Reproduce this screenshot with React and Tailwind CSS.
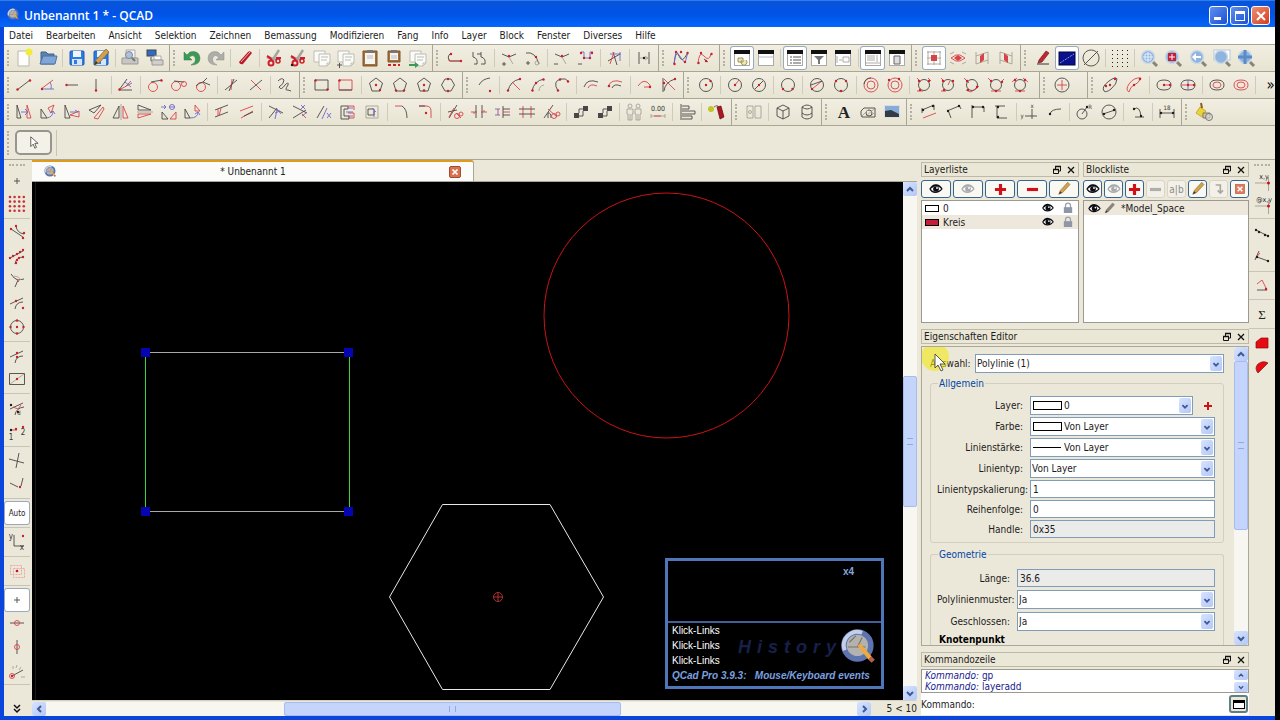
import React from "react";

const INK = { k: "#4a4643", r: "#d8434a", b: "#6c67cc", g: "#a5a197", w: "#ffffff" };

/* Compact drawing notation, parts separated by ";".
   k/r/b/g/w + path = stroke, capital letter = fill,
   "d x y ..." = red dots, "q x y ..." = dark dots,
   "ok x y r" = circle outline, "t size x y text" = label */
function Glyph({ s }) {
  return (
    <>
      {s.split(";").map((part, i) => {
        const p = part.trim();
        const op = p.slice(0, p.indexOf(" "));
        const rest = p.slice(p.indexOf(" ") + 1);
        if (op === "d" || op === "q") {
          const n = rest.split(" ").map(Number);
          const dots = [];
          for (let j = 0; j < n.length; j += 2) dots.push(<circle key={j} cx={n[j]} cy={n[j + 1]} r="1.2" fill={op === "d" ? "#c8202c" : "#1c1c1c"} />);
          return <g key={i}>{dots}</g>;
        }
        if (op[0] === "o") {
          const n = rest.split(" ");
          return <circle key={i} cx={n[0]} cy={n[1]} r={n[2]} fill="none" stroke={INK[op[1]]} strokeWidth="0.9" />;
        }
        if (op === "t") {
          const [size, x, y, ...words] = rest.split(" ");
          return <text key={i} x={x} y={y} fontSize={size} textAnchor="middle" fill="#333">{words.join(" ")}</text>;
        }
        if (op === op.toUpperCase()) return <path key={i} d={rest} fill={INK[op.toLowerCase()]} />;
        return <path key={i} d={rest} fill="none" stroke={INK[op]} strokeWidth="0.9" />;
      })}
    </>
  );
}

const G = {
  "Linie 2 Punkte": "k M5 17L18 7;d 5.5 16.5 18 7.5",
  "Linie Winkel": "r M5 16L17 7;b M6 16H18M14 9Q16 12 15 16;d 6 16",
  "Linie horizontal": "k M6 12H18;d 6.5 12",
  "Linie vertikal": "k M12 6V18;d 12 17.5",
  "Winkelhalbierende": "k M5 17L13 6M5 17H18;r M5 17L18 10;b M11 9L17 14M12 13L17 8;d 5.5 16.5",
  "Tangente 1": "or 10 14 4.5;k M8 9L19 7;d 18.5 7.5",
  "Tangente 2": "or 9 13 4.5;k M7 8L17 9;or 17 11 2.5",
  "Tangente rechtwinklig": "or 10 14 4.5;k M5 13Q8 10 12 9L19 12M12 9L16 5",
  "Relativer Winkel": "k M5 17L17 7;r M12 6L11 17;k M14 6L9 18",
  "Orthogonal": "k M6 17L18 7;r M7 7L17 17",
  "Freihand": "k M5 8Q9 4 11 7Q11 11 6 14Q8 18 12 12Q16 8 15 12Q11 18 15 17L18 18",
  "Rechteck 2 Punkte": "k M5 7H18V17H5Z;d 5.5 7.5 17.5 16.5",
  "Rechteck Grösse": "r M5 7H18V17H5Z;k M5 17H18;d 5.5 7.5",
  "Polygon Zentrum Ecke": "k M12 5L18.5 10L16 18H8L5.5 10Z;d 12 12 16 17",
  "Polygon Seite": "k M12 5L18.5 10L16 18H8L5.5 10Z;d 8 17.5 16 17.5",
  "Polygon Zentrum Seite": "k M12 5L18.5 10L16 18H8L5.5 10Z;d 12 12 12 17.5",
  "Polygon Seite Seite": "k M9 6H15L18.5 12L15 18H9L5.5 12Z;d 12 6 12 18",
  "Bogen": "k M6 12Q9 6 17 5;d 17 18",
  "Bogen 3 Punkte": "k M6 18Q8 8 18 6;r M10 9L18 17;d 6 17.5 18 6",
  "Bogen 2 Punkte Radius": "k M6 18Q8 8 18 6;g M13 18Q13 13 18 12;d 6.5 17.5 17.5 6.5 10 10",
  "Bogen 2 Punkte Winkel": "k M8 18Q2 8 11 6Q16 5 18 8;d 8 17.5 18 8.5 10 6.5",
  "Bogen konzentrisch": "k M4 14Q7 5 18 9;r M8 15Q10 10 17 13",
  "Bogen konzentrisch Abstand": "r M4 14Q7 5 18 9;k M8 15Q10 10 17 13;d 5 13",
  "Bogen tangential": "r M5 13Q11 4 17 12V14H11;d 17 14",
  "Bogen Segment": "k M6 5V19M7 18Q8 9 18 6;r M7 6L18 17;d 7 10 18 6",
  "Kreis Zentrum Punkt": "ok 12 12 6.5;d 12 12 16.5 8",
  "Kreis Zentrum Radius": "ok 12 12 6.5;r M12 12L16 7;d 12 12",
  "Kreis Zentrum Durchmesser": "ok 12 12 6.5;k M8 16L16 8;d 12 12",
  "Kreis 2 Punkte": "ok 12 12 6.5;d 7 16 16.5 16",
  "Kreis 2 Punkte Radius": "ok 12 12 6.5;r M7 16L17 8;k M6 12L17 8;d 7 16",
  "Kreis 3 Punkte": "ok 12 12 6.5;d 7 8 17 8 12 18",
  "Kreis konzentrisch": "or 12 12 7;or 12 12 4;k M5 11Q6 5 12 5",
  "Kreis konzentrisch Abstand": "or 12 12 7;or 12 12 4;d 16 6 6 7",
  "Kreis tangential 1": "ok 12 12 5.5;r M5 5L9 9M5 18H11M16 5L19 8;d 7 8 17 8 8 17",
  "Kreis tangential 2": "ok 12 12 5.5;r M5 5L9 9M5 18H10M12 12L14 8;d 7 8 17 8 8 17",
  "Kreis tangential 3": "ok 12 12 5.5;r M4 5L9 10M6 17L11 19L19 13;d 7 8 8 17 17 14",
  "Kreis tangential 4": "ok 12 12 5.5;r M4 5L8 9M7 18H17M17 9L20 6;d 7 8 12 18 18 9",
  "Kreis tangential 5": "ok 12 12 5.5;r M4 9L9 5M7 18H17M15 5L20 9;d 7 7 17 7 12 18",
  "Kreis Inkreis": "ok 12 12 7;r M12 7V17M7 12H17",
  "Ellipse Zentrum": "k M6 18Q3 14 11 8Q18 3 19 6Q19 11 13 16Q8 20 6 18;d 12 12 17 6 8 13",
  "Ellipsenbogen": "r M7 19Q3 17 7 11Q12 4 19 5M19 5Q16 11 12 12Q8 14 7 19;d 12 12 18 6",
  "Ellipse 4 Punkte": "k M5 12Q5 7 12 7T19 12Q19 17 12 17T5 12;r M12 12H19;d 12 12 18 12",
  "Ellipse in Rechteck": "k M5 12Q5 7 12 7T19 12Q19 17 12 17T5 12;b M12 7V17;r M6 12H19;d 12 12 18 12",
  "Ellipse konzentrisch": "k M5 12Q5 7 12 7T19 12Q19 17 12 17T5 12;r M8 12Q8 9 12 9T16 12Q16 15 12 15T8 12",
  "Ellipse konzentrisch Abstand": "r M5 12Q5 7 12 7T19 12Q19 17 12 17T5 12;r M8 12Q8 9 12 9T16 12Q16 15 12 15T8 12",
  "Verschieben": "k M5 5V18H9Z;r M15 5V18H19Z;b M9 12H16M13 9L16 12L13 15",
  "Drehen": "k M5 9V18H11Z;r M12 8L18 5L15 13Z;b M11 18Q17 17 17 11M14 13L17 11L19 14",
  "Verschieben und Drehen": "k M5 5V18H10Z;r M10 15L19 11V17Z;b M10 12H18M15 10L18 12",
  "Skalieren": "k M4 10L16 5L9 13Z;r M9 18L18 7L19 9L13 19Z",
  "Spiegeln": "k M4 18L10 6V18Z;r M14 6L19 18H14Z;g M12 4V20",
  "Kippen": "k M5 5L18 10H5Z;r M5 18L18 14H5Z;g M4 12H20",
  "Drehen zwei": "k M5 12V19H11Z;r M19 12V19H13Z;b M4 7H9M7 5L9 7L7 9M12 7H18;ob 15 7 2.5",
  "Drehen und Kopieren": "k M4 9V18H9Z;r M14 5L19 11H14Z;b M9 18Q17 18 17 12M14 14L17 12L19 15",
  "Trimmen": "k M5 10L18 5M5 17L18 12;r M8 9V16M11 8L9 16",
  "Trimmen beide": "r M5 11L18 6M6 18L18 11;k M9 16L18 12",
  "Verlängern": "k M5 6L19 13M5 18L13 8;b M13 9L17 14M11 13L16 11M11 19L13 10",
  "Dehnen": "k M5 6L19 13M5 18L18 10;b M13 5L17 9M14 16L18 13M17 5L13 9;r M14 14L18 18",
  "Linie teilen": "k M5 18L12 6;b M10 19L15 8M15 13L19 18M15 18L19 13",
  "Abrunden Kette": "k M5 6H12V9H8V16H13V19H5Z;r M12 6H18V10M12 13H18V18H12;b M12 8H17M10 12H17M12 16H17",
  "Explodieren": "g M6 6H18V18H6Z;k M8 9H14V15H8Z;b M12 8L16 12M14 11V17",
  "Fase": "r M5 6H12;k M12 6Q17 9 17 18",
  "Abrunden": "r M5 6H12Q17 6 17 11V18;k M5 6H11;d 12 13",
  "Teilen": "k M6 18L14 5M5 12L14 10;r M11 8L6 17M13 13L18 18;or 14 16 2.5;or 18 14 2",
  "Unterbrechen": "r M4 12H10M14 12H20;k M9 5V18M15 5V18;r M7 12V14M17 12V10",
  "Ausbrechen": "k M12 6V18M12 9H19M12 15H19;r M12 12H19M7 9V15;b M4 9H9M4 15H9",
  "Schnitt": "r M8 6V18M16 6V18;k M4 9H20M4 14H20",
  "Schere Pfad": "k M4 18L13 5M8 18V13Q11 12 11 18;r M8 9L17 17;or 14 16 2.5;or 18 14 2",
  "Ordnung vor": "K M5 13H10V18H5Z M14 6H19V11H14Z;k M10 16H14V11M10 13V9H14",
  "Ordnung hinter": "K M5 13H10V18H5Z M14 6H19V11H14Z;k M10 16H14V11M10 13V9H14",
  "Eigenschaften kopieren": "g M5 9H11V14H10V20H6V14H5ZM13 9H19V14H18V20H14V14H13ZM8 14V20M16 14V20;og 8 6 2;og 16 6 2",
  "Nullpunkt": "t 7 12 11 0.00;g M5 16H19M5 14V18M19 14V18;r M8 16H15",
  "Ausrichten": "k M6 4V20M7 6H14V9H7M7 11H20V14H7M7 16H17V19H7",
  "Block": "g M5 6H11V18H5ZM13 6H19V18H13Z;og 8 12 1.5",
  "Quader": "k M12 5L18 8V16L12 19L6 16V8ZM6 8L12 11L18 8M12 11V19",
  "Zylinder": "k M7 7Q12 3 17 7V17Q12 21 7 17ZM7 7Q12 11 17 7M7 13Q12 17 17 13",
  "Schraffur": "k M5 15V11L8 8H19V17H6Z;ok 13 13 3;g M6 16L13 9M9 17L18 9M14 17L18 13",
  "Bemassung ausgerichtet": "k M5 10L17 5M5 8V13M17 5V10;r M6 18L19 13;q 6 10 16 6",
  "Bemassung gedreht": "k M5 11L17 6M6 10L9 18M17 5L19 9;q 6 11 17 6",
  "Bemassung horizontal": "k M6 7H18M6 5V18M18 7V12;q 7 7 17 7",
  "Bemassung vertikal": "k M7 6V18M5 6H15M7 18H17;q 8 7 8 17",
  "Bemassung Ordinate": "k M13 9V19M6 16H18;t 6 13 8 x;t 6 3 18 y",
  "Führungslinie": "k M7 14Q8 9 18 9;q 7 14",
  "Bemassung Radius": "ok 10 14 5;k M10 14L15 7;t 6 18 9 R;q 15 7",
  "Bemassung Durchmesser": "ok 12 12 7;k M6 14L18 10;q 7 14 17 10",
  "Bemassung Winkel": "k M8 9Q14 5 15 17M9 17H18;q 8 9 15 16",
  "Bemassung Text": "k M5 13H19M5 9V18M19 9V18;t 6 12 10 18;q 6 13 18 13",
  "Polylinie zeichnen": "k M8 7Q3 11 7 15H18;r M6 13V15H18;d 18 15 8 8",
  "Segment anhängen": "k M5 6V11Q10 12 9 18H6M13 6V11Q18 12 17 18H13M9 8H13",
  "Knoten hinzufügen": "k M5 8L12 11L19 8M5 18H9M7 16V20;g M12 11L16 18;d 12 10",
  "Knoten anhängen": "k M5 7Q14 5 18 18M5 17H9M7 15V19;og 16 17 2;d 15 11",
  "Knoten löschen": "k M5 8L12 11L19 8M4 18H8;g M12 11L16 18;d 12 10",
  "Segment löschen": "b M7 6H10V12H16V6H19;k M4 18H8;d 7 7 10 12 16 12 18 7",
  "Polylinie trimmen": "k M5 15L17 8M10 6L14 19;b M7 8H18M17 6V15;r M7 18L11 6",
  "Äquidistant": "k M7 6V18M17 6V18;g M7 12H17M13 10L16 12L13 14;q 12 12",
  "Spline Kontrollpunkte": "k M5 18Q7 2 10 10T18 8;b M5 18L7 5L16 17L19 6;d 5.5 18 7 6 12 6 16 16 18.5 7",
  "Spline Passpunkte": "r M5 18Q6 4 11 10T18 8;k M11 13L15 16;d 5.5 17 8 7 13 15 18.5 8",
  "Iso oben": "r M5 12L10 9H14L19 12L14 15H10Z;R M8 12L12 9L16 12L12 15Z;g M4 8L8 6M16 6L20 8M4 16L8 18M16 18L20 16",
  "Iso links": "g M6 6V18M18 6V18M6 10L18 6M6 18L18 14;R M10 10L14 7V14L10 17Z",
  "Iso rechts": "g M6 6V18M18 6V18M6 6L18 10M6 14L18 18;R M10 7L14 10V17L10 14Z",
  "Orthogonales Raster": "g M6 5V19M18 5V19M5 6H19M5 18H19M5 12H19M12 5V19;R M9 9H15V15H9Z",
  "Ohne Füllung": "k M12 4A8 8 0 1 0 12.1 4M5 19L19 5",
  "Fang frei": "k M9 12H15M12 9V15",
  "Fang Endpunkte": "k M6 8L18 16M11 5Q12 12 19 13;d 6 8 18 17 11 5 19 12",
  "Fang auf Objekt": "k M5 13L18 6M10 19Q11 12 19 12;d 5 13 8 11 12 9 15 7 18 5 11 18 12 15 14 13 18 12",
  "Fang lotrecht": "k M6 6Q9 11 13 12L19 11M13 12L10 19;g M9 8Q14 8 16 12;r M11 11L14 14",
  "Fang tangential": "k M5 13L18 7M10 18Q11 11 18 11;d 18 17 11 10",
  "Fang Zentrum": "ok 12 12 6.5;d 12 12 5.5 12 18.5 12 12 5.5 12 18.5",
  "Fang Mitte": "k M5 13L18 7M10 19Q11 12 18 12;d 12 9 12 13",
  "Fang Referenz": "k M4.5 6.5H19.5V17.5H4.5Z;g M5 17L19 7;d 12 12",
  "Fang Schnittpunkt": "k M5 13L18 7M10 19Q11 12 19 11;q 6 9 13 16;r M8 11L13 13L16 9;t 6 14 19 d",
  "Fang Abstand": "r M6 10H12;t 8 6 20 1;t 8 18 15 2;q 6 10;d 11 9 18 7",
  "Fang Kreuz": "k M14 4L11 19M4 10L19 14",
  "Fang Kreuz manuell": "k M5 11L13 15M18 6L16 14;d 15 15",
  "Koordinate kartesisch": "k M9 5V16H19;t 8 6 9 y;t 8 17 20 x;d 18 6",
  "Keine Einschränkung": "k M9 12H15M12 9V15",
  "Einschränkung horizontal": "k M5 12H19;or 12 12 2.5",
  "Einschränkung vertikal": "k M12 5V19;or 12 12 2.5",
  "Einschränkung Winkel": "k M7 18L18 12;or 7 18 2.5;g M16 19H20M8 8V11M12 7L11 10M16 9L14 12;d 7 18",
  "Abstand Punkte": "k M6 9L18 15;q 6 9 9 11 18 15 15 14",
  "Abstand Objekt": "k M7 12L18 16M9 6L5 15;r M5 14L10 8;q 7 12 18 16",
  "Winkel messen": "r M7 10L12 6L17 16;k M7 16H17;d 16 15",
};

const Frame = ({ children }) => (
  <>
    <rect x="4.500" y="4.500" width="15" height="15" fill="#fff" stroke="#aaa" />
    <rect x="4" y="4" width="16" height="4" fill="#111" />
    {children}
  </>
);
const Lens = ({ children }) => (
  <>
    <path d="M14 14L20 20" stroke="#8a8376" strokeWidth="3" />
    <circle cx="11" cy="11" r="6.500" fill="#8fb4dd" stroke="#cdd9e6" strokeWidth="1.500" />
    {children}
  </>
);
const Scissors = () => (
  <>
    <path d="M17 4L10 15M5 11L15 14" stroke="#a8a59e" strokeWidth="2.500" />
    <circle cx="9" cy="17" r="2.500" fill="none" stroke="#cf1f2c" strokeWidth="2" />
    <path d="M5 10Q9 12 10 15M14 12L19 12" stroke="#cf1f2c" strokeWidth="2" fill="none" />
    <circle cx="16" cy="15" r="2" fill="none" stroke="#cf1f2c" strokeWidth="1.500" />
  </>
);
const Pages = () => (
  <g fill="#fbfbf8" stroke="#bdbcb4">
    <path d="M4 5H15V16H4Z" />
    <path d="M9 8H20V17L17 20H9Z" />
    <path d="M20 17H17V20M11 11H18M11 14H17" fill="none" />
  </g>
);
const Clip = ({ small }) => (
  <g>
    <path d={small ? "M6 5H18V16H6Z" : "M5 5H19V20H5Z"} fill="#a2703c" stroke="#7e552b" />
    <path d={small ? "M8 7H16V14H8Z" : "M7 7H17V18H7Z"} fill="#f5f4f0" />
    <path d="M9 4H15V7H9Z" fill="#777" />
    <path d="M9 10H15M9 12H15" stroke="#bbb" />
    {small && <path d="M6 19H18" stroke="#cc2222" strokeWidth="2" strokeDasharray="3 2" />}
  </g>
);
const Floppy = () => (
  <g>
    <rect x="5" y="5" width="14" height="14" rx="1" fill="#2f7be0" stroke="#1b59b8" />
    <rect x="8" y="5" width="8" height="6" fill="#eef4fc" />
    <rect x="7" y="13" width="10" height="6" fill="#d5e5f8" />
    <rect x="9" y="14" width="3" height="4" fill="#2f7be0" />
  </g>
);
const Pencil = ({ gray }) => (
  <g>
    <path d="M5 19L7 14L17 3L20 6L10 17Z" fill={gray ? "#8c857c" : "#d3a04c"} stroke={gray ? "#6b655e" : "#82602c"} strokeWidth="0.700" />
    <path d="M5 19L7 15L9 17Z" fill="#333" />
  </g>
);
const Eye = ({ dim }) => (
  <g fill={dim ? "#a9a9a9" : "#0c0c14"}>
    <path d="M2 12Q6 4 13 5Q19 6 22 12Q17 18 11 18Q5 18 2 12Z" />
    <path d="M4 12Q8 8 12 8Q17 8 20 12Q15 16 11 16Q7 16 4 12Z" fill="#fff" />
    <circle cx="12" cy="12" r="4.300" />
    <circle cx="13.500" cy="10.500" r="1.400" fill="#fff" />
  </g>
);
const Plus = () => <path d="M10 5H14V10H19V14H14V19H10V14H5V10H10Z" fill="#cf1018" />;
const Minus = () => <path d="M5 10H19V14H5Z" fill="#cf1018" />;
const Coord = ({ label }) => (
  <>
    <text x="14" y="10" fontSize="7" textAnchor="middle" fill="#222">{label}</text>
    <path d="M5 14H19M18.500 8V22" stroke="#a9a49a" />
    <circle cx="18.500" cy="14" r="1.500" fill="#c8101c" />
  </>
);
const AppLogo = () => (
  <>
    <circle cx="11" cy="11" r="8.500" fill="#b4b2ae" stroke="#5d74ae" strokeWidth="3.500" />
    <path d="M3 14A8.500 8.500 0 0 1 14 3" fill="none" stroke="#c3cfe8" strokeWidth="2.500" />
    <path d="M5 12H16M11 12L14 6M6 9L10 5" stroke="#77746f" strokeWidth="0.700" />
    <path d="M11 11L18 20L20 18L13 10Z" fill="#f0a93c" />
    <path d="M18 20L20 18L22 20L20 22Z" fill="#b5604c" />
  </>
);

const ART = {
  "Neu": (
    <>
      <path d="M6 5H17V20H6Z" fill="#fdfdfb" stroke="#b9b7ae" />
      <circle cx="17" cy="6" r="3.500" fill="#f1ec3a" />
    </>
  ),
  "Öffnen": (
    <>
      <path d="M5 6H10L12 8H18V18H5Z" fill="#5c82b2" stroke="#3f6291" />
      <path d="M7 10H21L19 18H4Z" fill="#7fa6d6" stroke="#4b71a3" />
    </>
  ),
  "Speichern": <Floppy />,
  "Speichern unter": <><Floppy /><Pencil /></>,
  "Druckvorschau": (
    <>
      <path d="M8 4H17V12H8Z" fill="#f4f4f2" stroke="#aaa" />
      <path d="M4 12H20V18H4Z" fill="#c6c6c2" stroke="#999" />
      <circle cx="11" cy="9" r="3.500" fill="#a9c2e2" stroke="#888" />
      <path d="M14 12L17 15" stroke="#777" strokeWidth="2" />
    </>
  ),
  "Drucken": (
    <>
      <rect x="4" y="4" width="9" height="6" fill="#2e6cc4" stroke="#444" />
      <path d="M8 11V15H10" stroke="#555" fill="none" />
      <path d="M11 10H18V14H11Z" fill="#fff" stroke="#aaa" />
      <path d="M9 14H20V19H9Z" fill="#d0cfca" stroke="#999" />
    </>
  ),
  "Rückgängig": <path d="M4 6V14H12L9 11Q13 8 15 11Q17 16 11 19Q20 19 20 12Q19 4 10 6L7 9Z" fill="#3d9a56" stroke="#2c7c42" strokeWidth="0.500" />,
  "Wiederholen": <path d="M20 6V14H12L15 11Q11 8 9 11Q7 16 13 19Q4 19 4 12Q5 4 14 6L17 9Z" fill="#aeada8" stroke="#8f8e89" strokeWidth="0.500" />,
  "Radieren": (
    <>
      <path d="M6 16L15 6Q17 4 19 7L10 18Q7 19 6 16Z" fill="#b81c26" />
      <path d="M8 16L17 6" stroke="#f2b7b7" />
    </>
  ),
  "Ausschneiden": <Scissors />,
  "Ausschneiden mit Referenz": <><Scissors /><Glyph s="q 6 19" /></>,
  "Kopieren": <Pages />,
  "Kopieren mit Referenz": <><Pages /><Glyph s="k M3 19H8M5.500 17V22" /></>,
  "Einfügen": <Clip />,
  "Einfügen Punkte": <Clip small />,
  "Einfügen Block": <><Pages /><path d="M3 14V18H9V16L13 19L9 22V20H3Z" fill="#3d9a56" /></>,
  "Eigenschaftenfenster": <Frame><path d="M8 12H13V16H8ZM12 14A3 3 0 1 0 16 14" fill="#efe7b0" stroke="#8c7f40" strokeWidth="0.800" /></Frame>,
  "Bibliothek": <Frame><path d="M5 11H19" stroke="#bbc" /></Frame>,
  "Layerliste": <Frame><Glyph s="k M7 11H9M7 14H9M7 17H9M10 11H18M10 14H18M10 17H18" /></Frame>,
  "Auswahlfilter": <Frame><path d="M7 10H17L13 14V18H11V14Z" fill="#777" /></Frame>,
  "Blockliste": <Frame><Glyph s="g M6 10V17M8 14H11M12 11H18V16H12Z" /></Frame>,
  "Kommandozeile": <Frame><Glyph s="g M6 10H14M6 12H14M6 14H14M4 17H20M16 9V16" /></Frame>,
  "Zwischenablage": <Frame><path d="M9 10H15V18H9Z" fill="#ddd" stroke="#666" /></Frame>,
  "Entwurfsmodus": (
    <>
      <path d="M8 14L15 5L18 7L11 16L7 17Z" fill="#c42630" stroke="#6f1f1f" strokeWidth="0.700" />
      <path d="M6 18H18" stroke="#333" />
    </>
  ),
  "Bildschirmlinien": (
    <>
      <rect x="4" y="6" width="16" height="13" fill="#0a118c" stroke="#000640" />
      <path d="M5 17L19 8" stroke="#8c93e8" strokeDasharray="2 1" />
    </>
  ),
  "Raster": (
    <g fill="#222">
      {[0, 1, 2, 3, 4].map((r) => [0, 1, 2, 3].map((c) => <rect key={r + "-" + c} x={4 + c * 5} y={4 + r * 4} width="1" height="1" />))}
    </g>
  ),
  "Auto Zoom": <Lens><path d="M8 8H14V14H8ZM11 6V16M6 11H16" stroke="#e8f1fc" fill="none" /></Lens>,
  "Zoom Auswahl": <Lens><path d="M7 7H15V15H7Z" fill="#c41f38" /><path d="M11 8V14M8 11H14" stroke="#fff" /></Lens>,
  "Vorherige Ansicht": <Lens><path d="M6 11L10 7V10H15V12H10V15Z" fill="#fff" /></Lens>,
  "Fenster Zoom": <><rect x="4" y="4" width="16" height="10" fill="#fff" stroke="#b9c5d8" /><Lens /></>,
  "Verschieben Ansicht": <><Lens /><path d="M11 4V18M4 11H18" stroke="#5c8cc8" strokeWidth="3" /></>,
  "Farbwähler": (
    <>
      <circle cx="7" cy="9" r="3" fill="#c5c428" />
      <path d="M10 7Q14 4 15 8" stroke="#666" fill="none" />
      <path d="M13 7L17 6L20 17L16 19Z" fill="#b01620" stroke="#5e0d12" strokeWidth="0.700" />
    </>
  ),
  "Text": <text x="12" y="18" fontSize="17" fontWeight="bold" textAnchor="middle" fill="#222" className="font-['Liberation_Serif',serif]">A</text>,
  "Bild": (
    <>
      <rect x="4.500" y="5.500" width="15" height="12" fill="#86add8" stroke="#ddd" />
      <path d="M5 11L11 10L19 14V17H5Z" fill="#333b44" />
    </>
  ),
  "Aufräumen": (
    <>
      <path d="M4 13L8 7L14 11L10 17Z" fill="#ecd234" stroke="#b49a1a" strokeWidth="0.700" />
      <path d="M10 8L9 3" stroke="#8a5a28" strokeWidth="2" />
      <path d="M11 13H18V18H11Z" fill="#d8c88a" stroke="#777" />
      <circle cx="17" cy="17" r="3.500" fill="#ddd" fillOpacity=".6" stroke="#777" />
    </>
  ),
  "Fang Raster": (
    <g fill="#c8333a">
      {[0, 1, 2, 3].map((r) => [0, 1, 2, 3].map((c) => <circle key={r + "-" + c} cx={5 + c * 4.6} cy={5 + r * 4.6} r="1.300" />))}
    </g>
  ),
  "Einschränkung aus": (
    <>
      <path d="M5.500 6.500H16.500V15.500H5.500ZM8.500 9.500H19.500V18.500H8.500Z" fill="none" stroke="#eba9a4" strokeDasharray="2 1" />
      <circle cx="12" cy="12" r="1.300" fill="#c8101c" />
    </>
  ),
  "Koordinate x,y": <Coord label="x,y" />,
  "Koordinate @x,y": <Coord label="@x,y" />,
  "Summe": <text x="12" y="17" fontSize="13" textAnchor="middle" fill="#222" className="font-['Liberation_Serif',serif]">Σ</text>,
  "Fläche": <path d="M6 17V11L11 7H18V17Z" fill="#e80c10" stroke="#7c1010" strokeWidth="0.700" />,
  "Fläche Kreis": <path d="M8 18Q4 13 8 9Q13 5 18 8Z" fill="#e80c10" stroke="#7c1010" strokeWidth="0.700" />,
};

const Icon = ({ name, className = "size-6" }) => (
  <svg viewBox="0 0 24 24" className={className + " shrink-0"} aria-hidden="true">
    {ART[name] || <Glyph s={G[name]} />}
  </svg>
);

/* "|" separator, "‖" toolbar boundary, "_" and "__" blank space, leading "!" checked button */
const ROW1 = ["Neu", "Öffnen", "|", "Speichern", "Speichern unter", "|", "Druckvorschau", "Drucken", "‖", "Rückgängig", "Wiederholen", "|", "Radieren", "|", "Ausschneiden", "Ausschneiden mit Referenz", "Kopieren", "Kopieren mit Referenz", "Einfügen", "Einfügen Punkte", "Einfügen Block", "‖", "Polylinie zeichnen", "Segment anhängen", "|", "Knoten hinzufügen", "Knoten anhängen", "|", "Knoten löschen", "Segment löschen", "|", "Polylinie trimmen", "|", "Äquidistant", "‖", "Spline Kontrollpunkte", "Spline Passpunkte", "‖", "!Eigenschaftenfenster", "Bibliothek", "|", "!Layerliste", "Auswahlfilter", "Blockliste", "|", "!Kommandozeile", "Zwischenablage", "‖", "!Orthogonales Raster", "Iso oben", "Iso links", "Iso rechts", "‖", "Entwurfsmodus", "!Bildschirmlinien", "Ohne Füllung", "|", "Raster", "|", "Auto Zoom", "Zoom Auswahl", "Vorherige Ansicht", "Fenster Zoom", "Verschieben Ansicht"];
const ROW2 = ["Linie 2 Punkte", "Linie Winkel", "Linie horizontal", "Linie vertikal", "|", "Winkelhalbierende", "|", "Tangente 1", "Tangente 2", "Tangente rechtwinklig", "|", "Relativer Winkel", "Orthogonal", "|", "Freihand", "‖", "Rechteck 2 Punkte", "Rechteck Grösse", "|", "Polygon Zentrum Ecke", "Polygon Seite", "Polygon Zentrum Seite", "Polygon Seite Seite", "‖", "Bogen", "|", "Bogen 3 Punkte", "Bogen 2 Punkte Radius", "Bogen 2 Punkte Winkel", "|", "Bogen konzentrisch", "Bogen konzentrisch Abstand", "|", "Bogen tangential", "Bogen Segment", "‖", "Kreis Zentrum Punkt", "|", "Kreis Zentrum Radius", "Kreis Zentrum Durchmesser", "|", "Kreis 2 Punkte", "|", "Kreis 2 Punkte Radius", "Kreis 3 Punkte", "|", "Kreis konzentrisch", "Kreis konzentrisch Abstand", "|", "Kreis tangential 1", "Kreis tangential 2", "Kreis tangential 3", "Kreis tangential 4", "Kreis tangential 5", "_", "‖", "Kreis Inkreis", "__", "‖", "Ellipse Zentrum", "Ellipsenbogen", "|", "Ellipse 4 Punkte", "Ellipse in Rechteck", "|", "Ellipse konzentrisch", "Ellipse konzentrisch Abstand", "|"];
const ROW3 = ["Verschieben", "Drehen", "Verschieben und Drehen", "Skalieren", "Spiegeln", "Kippen", "Drehen zwei", "Drehen und Kopieren", "|", "Trimmen", "Trimmen beide", "|", "Verlängern", "Dehnen", "Linie teilen", "Abrunden Kette", "Explodieren", "|", "Fase", "Abrunden", "|", "Teilen", "Unterbrechen", "Ausbrechen", "Schnitt", "Schere Pfad", "|", "Ordnung vor", "Ordnung hinter", "|", "Eigenschaften kopieren", "Nullpunkt", "|", "Ausrichten", "|", "Farbwähler", "‖", "Block", "|", "Quader", "Zylinder", "‖", "Text", "Schraffur", "Bild", "‖", "Bemassung ausgerichtet", "Bemassung gedreht", "Bemassung horizontal", "Bemassung vertikal", "|", "Bemassung Ordinate", "Führungslinie", "|", "Bemassung Radius", "Bemassung Durchmesser", "|", "Bemassung Winkel", "|", "Bemassung Text", "‖", "Aufräumen"];
const LEFT = ["Fang frei", "Fang Raster", "|", "Fang Endpunkte", "Fang auf Objekt", "Fang lotrecht", "Fang tangential", "Fang Zentrum", "|", "Fang Mitte", "Fang Referenz", "|", "Fang Schnittpunkt", "Fang Abstand", "|", "Fang Kreuz", "Fang Kreuz manuell", "|", "!Auto", "|", "Koordinate kartesisch", "|", "Einschränkung aus", "|", "!Keine Einschränkung", "Einschränkung horizontal", "Einschränkung vertikal", "Einschränkung Winkel", "|"];
const RIGHT = ["Koordinate x,y", "Koordinate @x,y", "|", "Abstand Punkte", "Abstand Objekt", "|", "Winkel messen", "|", "Summe", "|", "Fläche", "Fläche Kreis"];

const WEIGHT = { "|": 15, "‖": 33, _: 15, __: 33 };
const ROW_TOTAL = 3789;
const COLUMN_TOTAL = 1092;

function ToolRow({ items, more }) {
  const rest = ROW_TOTAL - items.reduce((sum, it) => sum + (WEIGHT[it] || 73), 0);
  return (
    <div role="toolbar" className="flex h-[27px] shrink-0 items-stretch border-t border-[#aaa696] bg-gradient-to-b from-[#f1eee2] to-[#e8e4d3]">
      <div className="w-2 shrink-0 pl-[3px]">
        <div className="my-[5px] h-4 border-l-2 border-dotted border-[#b5b1a1]" />
      </div>
      {items.map((it, i) => {
        if (it === "|") return <span key={i} className="flex min-w-0 flex-[15] justify-center"><i className="my-1 w-px bg-[#cfcbbc]" /></span>;
        if (it === "‖")
          return (
            <span key={i} className="flex min-w-0 flex-[33] justify-start pl-[2px]">
              <i className="w-px bg-[#aaa696]" />
              <i className="my-[5px] ml-[3px] border-l-2 border-dotted border-[#b5b1a1]" />
            </span>
          );
        if (it === "_") return <span key={i} className="flex-[15]" />;
        if (it === "__") return <span key={i} className="flex-[33]" />;
        const on = it[0] === "!";
        const name = on ? it.slice(1) : it;
        return (
          <button key={i} type="button" aria-label={name} className={"my-[1px] flex min-w-0 flex-[73] items-center justify-center " + (on ? "rounded-[3px] bg-white ring-1 ring-inset ring-[#9aa9bd]" : "")}>
            <Icon name={name} className="size-6" />
          </button>
        );
      })}
      <span style={{ flexGrow: rest }} className="flex min-w-0 basis-0 items-center justify-end">
        {more && <button type="button" aria-label="Mehr" className="text-[15px] leading-none text-black">»</button>}
      </span>
    </div>
  );
}

function ToolColumn({ items, label, more }) {
  const rest = COLUMN_TOTAL - items.reduce((sum, it) => sum + (it === "|" ? 11 : 47), 0);
  return (
    <div role="toolbar" aria-label={label} className="flex w-[26px] shrink-0 flex-col items-stretch bg-[#ece8d9]">
      <div className="h-[9px] shrink-0 px-[5px] pt-1">
        <div className="border-t-2 border-dotted border-[#b5b1a1]" />
      </div>
      {items.map((it, i) => {
        if (it === "|") return <span key={i} className="flex min-h-0 flex-[11] items-center"><i className="h-px w-full bg-[#c9c5b5]" /></span>;
        const on = it[0] === "!";
        const name = on ? it.slice(1) : it;
        return (
          <button key={i} type="button" aria-label={name} className={"flex min-h-0 flex-[47] items-center justify-center " + (on ? "rounded-[3px] bg-white ring-1 ring-inset ring-[#9aa9bd]" : "")}>
            {name === "Auto" ? <span className="text-[8px]">Auto</span> : <Icon name={name} />}
          </button>
        );
      })}
      <span style={{ flexGrow: rest }} className="flex min-h-0 basis-0 items-end justify-center pb-[2px]">
        {more && (
          <button type="button" aria-label="Mehr">
            <svg viewBox="0 0 8 10" className="h-[10px] w-2" aria-hidden="true"><path d="M1 1L4 4L7 1M1 5L4 8L7 5" fill="none" stroke="#111" strokeWidth="1.500" /></svg>
          </button>
        )}
      </span>
    </div>
  );
}

const ARROWS = { up: "M4 9L7 6L10 9", down: "M4 6L7 9L10 6", left: "M9 4L6 7L9 10", right: "M6 4L9 7L6 10" };
const Arrow = ({ dir, className = "size-[14px]" }) => (
  <svg viewBox="0 0 14 14" className={className + " shrink-0 rounded-[2px] bg-gradient-to-br from-[#d6e2ff] to-[#b4c8f6]"} aria-hidden="true">
    <path d={ARROWS[dir]} fill="none" stroke="#3d5a94" strokeWidth="2" />
  </svg>
);

const DockTitle = ({ title }) => (
  <div className="flex h-[15px] shrink-0 items-center border border-[#bdb9a9] bg-[#ebe7d6] pl-[2px] pr-[2px]">
    <h2 className="flex-1 leading-none">{title}</h2>
    <button type="button" aria-label={title + " lösen"} className="mr-1">
      <svg viewBox="0 0 10 10" className="size-[10px]" aria-hidden="true"><path d="M3.500 4V1.500H8.500V6H7M1.500 4.500H6.500V8.500H1.500Z" fill="none" stroke="#111" /><path d="M3 1.500H9M1 4.500H7" stroke="#111" strokeWidth="1.500" /></svg>
    </button>
    <button type="button" aria-label={title + " schliessen"}>
      <svg viewBox="0 0 10 10" className="size-[10px]" aria-hidden="true"><path d="M2 2L8 8M8 2L2 8" stroke="#111" strokeWidth="1.300" /></svg>
    </button>
  </div>
);

const DockButton = ({ label, off, children }) => (
  <button type="button" aria-label={label} disabled={off} className={"flex h-[18px] min-w-0 flex-1 items-center justify-center rounded-[3px] border " + (off ? "border-[#d8d4c6] bg-[#f2f0e8]" : "border-[#35648f] bg-[#f9f8f3]")}>
    {children}
  </button>
);
const Svg = ({ children, className = "size-4" }) => <svg viewBox="0 0 24 24" className={className + " shrink-0"} aria-hidden="true">{children}</svg>;

const Lock = () => (
  <svg viewBox="0 0 12 14" className="h-3 w-[10px]" aria-hidden="true">
    <path d="M3 7V4Q3 1 6 1T9 4V7" fill="none" stroke="#9aa0aa" strokeWidth="1.500" />
    <rect x="1" y="6" width="10" height="7" fill="#8d97a8" />
  </svg>
);

function LayerRow({ name, red }) {
  return (
    <li className={"flex h-[14px] items-center pl-[3px] pr-[5px] " + (red ? "bg-[#eee8dc]" : "")}>
      <i className={"h-[7px] w-[14px] border border-black " + (red ? "bg-[#c41e3c]" : "bg-white")} />
      <span className="ml-1 flex-1">{name}</span>
      <Svg className="mr-[7px] h-[14px] w-4"><Eye /></Svg>
      <Lock />
    </li>
  );
}

function Select({ id, value, swatch }) {
  return (
    <div className="relative h-[19px] min-w-0 flex-1">
      <select id={id} defaultValue={value} className={"h-full w-full appearance-none rounded-none border border-[#7f9db9] bg-white pr-4 outline-none " + (swatch ? "pl-[33px]" : "pl-[1px]")}>
        <option>{value}</option>
      </select>
      {swatch === "box" && <i className="absolute left-[3px] top-[5px] h-[9px] w-[29px] border border-black bg-white" />}
      {swatch === "line" && <i className="absolute left-[3px] top-[9px] h-px w-[28px] bg-black" />}
      <span className="pointer-events-none absolute bottom-[2px] right-[2px] top-[2px] flex w-3 items-center justify-center rounded-[2px] bg-gradient-to-br from-[#d6e2ff] to-[#b4c8f6]">
        <svg viewBox="0 0 14 14" className="size-[14px]" aria-hidden="true"><path d={ARROWS.down} fill="none" stroke="#3d5a94" strokeWidth="2" /></svg>
      </span>
    </div>
  );
}

function Field({ id, label, labelWidth, children }) {
  return (
    <div className="flex items-center">
      <label htmlFor={id} className={"shrink-0 whitespace-nowrap pr-[7px] text-right " + labelWidth}>{label}</label>
      {children}
    </div>
  );
}
const Input = ({ id, value, ro }) => (
  <input id={id} defaultValue={value} readOnly={ro} className={"h-[18px] min-w-0 flex-1 border border-[#7f9db9] pl-[2px] outline-none " + (ro ? "bg-[#ebebea]" : "bg-white")} />
);

const MENU = ["Datei", "Bearbeiten", "Ansicht", "Selektion", "Zeichnen", "Bemassung", "Modifizieren", "Fang", "Info", "Layer", "Block", "Fenster", "Diverses", "Hilfe"];

function TitleBar() {
  return (
    <header className="flex h-[27px] shrink-0 items-center border-t border-[#2b7cf0] bg-gradient-to-b from-[#0a54d8] via-[#0053e6] to-[#0667fb] pl-[7px] pr-[5px]">
      <Svg className="size-[13px]"><AppLogo /></Svg>
      <h1 className="ml-1 flex-1 pt-[3px] font-['Open_Sans',sans-serif] text-[12px] font-semibold leading-none text-white">Unbenannt 1 * - QCAD</h1>
      <div className="flex gap-[2px] pt-[3px]">
        <button type="button" aria-label="Minimieren" className="flex size-[19px] items-end rounded-[3px] border border-white bg-gradient-to-br from-[#5f8ff0] to-[#1d4fd0] p-1"><i className="h-[3px] w-[7px] bg-white" /></button>
        <button type="button" aria-label="Maximieren" className="flex size-[19px] items-center justify-center rounded-[3px] border border-white bg-gradient-to-br from-[#5f8ff0] to-[#1d4fd0]"><i className="h-[10px] w-[10px] border border-t-[3px] border-white" /></button>
        <button type="button" aria-label="Schliessen" className="flex size-[19px] items-center justify-center rounded-[3px] border border-white bg-gradient-to-br from-[#ee8d72] to-[#d33a14]">
          <svg viewBox="0 0 12 12" className="size-3" aria-hidden="true"><path d="M2 2L10 10M10 2L2 10" stroke="#fff" strokeWidth="2" /></svg>
        </button>
      </div>
    </header>
  );
}

function HistoryPanel() {
  return (
    <aside className="absolute bottom-[11px] right-[19px] flex h-[131px] w-[219px] flex-col border-[3px] border-[#4f76b8] bg-black font-['Liberation_Sans',sans-serif]">
      <div className="flex h-[62px] justify-end border-b-2 border-[#40609a] pr-[27px] pt-[4px] text-[10px] font-bold leading-[13px] text-[#86a5dc]">x4</div>
      <div className="relative flex-1 pl-1 text-[10px] leading-[15px] text-white">
        <p>Klick-Links</p>
        <p>Klick-Links</p>
        <p>Klick-Links</p>
        <p className="whitespace-pre font-bold italic text-[#7ba0e0]">QCad Pro 3.9.3:   Mouse/Keyboard events</p>
        <div className="absolute right-[3px] top-[5px] flex items-center gap-1">
          <span className="flex gap-[6px] text-[18px] font-bold italic leading-none text-[#17204a]">
            {"History".split("").map((c, i) => <span key={i}>{c}</span>)}
          </span>
          <Svg className="size-[38px]"><AppLogo /></Svg>
        </div>
      </div>
    </aside>
  );
}

function Drawing() {
  return (
    <div className="relative min-w-0 flex-1 overflow-hidden bg-black">
      <svg className="absolute inset-0 h-full w-full" role="img" aria-label="Zeichnung">
        <path d="M3.500 0V518" stroke="#1b1a18" />
        <path d="M113.500 170V329M317.500 170V329" stroke="#3fd23f" />
        <path d="M113 170.500H318M113 329.500H318" stroke="#a8a8a8" />
        {[[113, 170], [316, 170], [113, 329], [316, 329]].map(([x, y]) => <rect key={x + "," + y} x={x - 4} y={y - 4} width="9" height="9" fill="#0404b0" />)}
        <circle cx="634.500" cy="133.500" r="122.500" fill="none" stroke="#cc1414" />
        <path d="M410.500 322.500H518L571.500 415L518 507.500H410.500L357.500 415Z" fill="none" stroke="#e8e8e8" />
        <circle cx="466" cy="415" r="4.500" fill="none" stroke="#b03030" />
        <path d="M461 415H471M466 410V420" stroke="#b03030" />
      </svg>
      <HistoryPanel />
    </div>
  );
}

function Documents() {
  return (
    <main className="flex min-w-0 flex-1 flex-col pr-1">
      <div role="tablist" className="flex h-[22px] shrink-0 border-b border-[#aaa696]">
        <div role="tab" aria-selected="true" className="flex w-[442px] items-center rounded-tr-[3px] border-r border-t-2 border-r-[#aaa696] border-t-[#e09a1c] bg-[#fbfbfa] pl-3 pr-3">
          <Svg className="size-[13px]"><AppLogo /></Svg>
          <span className="flex-1 text-center">* Unbenannt 1</span>
          <button type="button" aria-label="Tab schliessen" className="flex size-3 items-center justify-center rounded-[2px] border border-[#a04c34] bg-[#d9714f]">
            <svg viewBox="0 0 8 8" className="size-2" aria-hidden="true"><path d="M1.500 1.500L6.500 6.500M6.500 1.500L1.500 6.500" stroke="#fff" strokeWidth="1.700" /></svg>
          </button>
        </div>
      </div>
      <div className="flex min-h-0 flex-1">
        <Drawing />
        <div className="flex w-[14px] shrink-0 flex-col bg-[#f7f6f1]">
          <Arrow dir="up" />
          <span className="flex-[181]" />
          <span className="flex flex-[130] items-center justify-center rounded-[2px] border border-[#a6bcf0] bg-[#c5d4fb]"><i className="h-[7px] w-[6px] border-y border-[#8fa9e6]" /></span>
          <span className="flex-[180]" />
          <Arrow dir="down" />
        </div>
      </div>
      <div className="flex h-[16px] shrink-0 items-center border-t border-[#d5d1c2]">
        <div className="flex h-[14px] flex-1 bg-[#f7f6f1]">
          <Arrow dir="left" />
          <span className="flex-[239]" />
          <span className="flex flex-[335] items-center justify-center rounded-[2px] border border-[#a6bcf0] bg-[#c5d4fb]"><i className="h-[6px] w-[7px] border-x border-[#8fa9e6]" /></span>
          <span className="flex-[237]" />
          <Arrow dir="right" />
        </div>
        <span className="w-[46px] text-right">5 &lt; 10</span>
      </div>
    </main>
  );
}

function Properties() {
  return (
    <section className="mt-[6px] flex min-h-0 flex-1 flex-col">
      <DockTitle title="Eigenschaften Editor" />
      <div className="relative mt-[2px] flex min-h-0 flex-1 overflow-hidden border border-[#aca899]">
        <div className="min-w-0 flex-1 pl-2 pr-[10px] pt-[7px]">
          <Field id="auswahl" label="Auswahl:" labelWidth="w-[45px]"><Select id="auswahl" value="Polylinie (1)" /></Field>
          <fieldset className="mt-1 rounded-[3px] border border-[#d3cfbf] pb-1 pl-[6px] pr-2">
            <legend className="ml-[1px] px-[1px] text-[#0046a8]">Allgemein</legend>
            <div className="flex flex-col gap-[2px] pt-[6px]">
              <Field id="layer" label="Layer:" labelWidth="w-[93px]">
                <Select id="layer" value="0" swatch="box" />
                <button type="button" aria-label="Layer hinzufügen" className="ml-2 flex w-[14px] justify-center">
                  <svg viewBox="0 0 10 10" className="size-[10px]" aria-hidden="true"><path d="M5 1V9M1 5H9" stroke="#cc1414" strokeWidth="2" /></svg>
                </button>
              </Field>
              <Field id="farbe" label="Farbe:" labelWidth="w-[93px]"><Select id="farbe" value="Von Layer" swatch="box" /></Field>
              <Field id="staerke" label="Linienstärke:" labelWidth="w-[93px]"><Select id="staerke" value="Von Layer" swatch="line" /></Field>
              <Field id="typ" label="Linientyp:" labelWidth="w-[93px]"><Select id="typ" value="Von Layer" /></Field>
              <Field id="skal" label="Linientypskalierung:" labelWidth="w-[93px]"><Input id="skal" value="1" /></Field>
              <Field id="folge" label="Reihenfolge:" labelWidth="w-[93px]"><Input id="folge" value="0" /></Field>
              <Field id="handle" label="Handle:" labelWidth="w-[93px]"><Input id="handle" value="0x35" ro /></Field>
            </div>
          </fieldset>
          <fieldset className="mt-[5px] rounded-t-[3px] border border-b-0 border-[#d3cfbf] pl-[6px] pr-2">
            <legend className="ml-[1px] px-[1px] text-[#0046a8]">Geometrie</legend>
            <div className="flex flex-col gap-[3px] pt-2">
              <Field id="laenge" label="Länge:" labelWidth="w-[80px]"><Input id="laenge" value="36.6" ro /></Field>
              <Field id="muster" label="Polylinienmuster:" labelWidth="w-[80px]"><Select id="muster" value="Ja" /></Field>
              <Field id="geschl" label="Geschlossen:" labelWidth="w-[80px]"><Select id="geschl" value="Ja" /></Field>
              <h3 className="pl-[2px] text-[10px] font-bold leading-[11px] text-black">Knotenpunkt</h3>
            </div>
          </fieldset>
        </div>
        <div className="flex w-[14px] shrink-0 flex-col bg-[#f7f6f1]">
          <Arrow dir="up" />
          <span className="flex flex-[168] items-center justify-center rounded-[2px] border border-[#a6bcf0] bg-[#c5d4fb]"><i className="h-[7px] w-[6px] border-y border-[#8fa9e6]" /></span>
          <span className="flex-[102]" />
          <Arrow dir="down" />
        </div>
        <svg viewBox="0 0 32 32" className="pointer-events-none absolute -top-[6px] left-0 size-8" aria-hidden="true">
          <circle cx="13" cy="16" r="14" fill="#f0e814" fillOpacity=".6" />
          <path d="M13 13V27L16 24L19 30L21 29L18 23H23Z" fill="#fff" stroke="#333" strokeWidth="0.800" />
        </svg>
      </div>
    </section>
  );
}

function Docks() {
  return (
    <div className="flex w-[328px] shrink-0 flex-col pb-px pt-[2px]">
      <div className="flex h-[161px] shrink-0 gap-1">
        <section className="flex w-[158px] flex-col">
          <DockTitle title="Layerliste" />
          <div className="flex gap-[2px] pb-[2px] pt-[3px]">
            <DockButton label="Alle Layer zeigen"><Svg><Eye /></Svg></DockButton>
            <DockButton label="Alle Layer verbergen"><Svg><Eye dim /></Svg></DockButton>
            <DockButton label="Layer hinzufügen"><Svg className="size-[19px]"><Plus /></Svg></DockButton>
            <DockButton label="Layer entfernen"><Svg className="size-[19px]"><Minus /></Svg></DockButton>
            <DockButton label="Layer bearbeiten"><Svg className="size-[18px]"><Pencil /></Svg></DockButton>
          </div>
          <ul className="flex-1 border border-[#9c9a90] bg-white">
            <LayerRow name="0" />
            <LayerRow name="Kreis" red />
          </ul>
        </section>
        <section className="flex min-w-0 flex-1 flex-col">
          <DockTitle title="Blockliste" />
          <div className="flex gap-[2px] pb-[2px] pt-[3px]">
            <DockButton label="Alle Blöcke zeigen"><Svg><Eye /></Svg></DockButton>
            <DockButton label="Alle Blöcke verbergen"><Svg><Eye dim /></Svg></DockButton>
            <DockButton label="Block hinzufügen"><Svg className="size-[19px]"><Plus /></Svg></DockButton>
            <DockButton label="Block entfernen" off><Svg className="size-[19px]"><path d="M5 10H19V14H5Z" fill="#b0aea8" /></Svg></DockButton>
            <DockButton label="Block umbenennen" off><span className="text-[#8e8c86]">a|b</span></DockButton>
            <DockButton label="Block bearbeiten"><Svg className="size-[18px]"><Pencil /></Svg></DockButton>
            <DockButton label="Block einfügen" off><Svg><path d="M7 6H14V18M10 14L14 18L18 14" fill="none" stroke="#a9a7a0" strokeWidth="2.500" /></Svg></DockButton>
            <DockButton label="Block schliessen"><Svg className="size-[14px]"><rect x="4" y="4" width="16" height="16" fill="#e07a5c" stroke="#b8573c" /><path d="M8 8L16 16M16 8L8 16" stroke="#fff" strokeWidth="2.500" /></Svg></DockButton>
          </div>
          <ul className="flex-1 border border-[#9c9a90] bg-white">
            <li className="flex h-[14px] items-center bg-[#eee8dc] pl-[3px]">
              <Svg className="size-[15px]"><Eye /></Svg>
              <Svg className="size-[15px]"><Pencil gray /></Svg>
              <span className="ml-1">*Model_Space</span>
            </li>
          </ul>
        </section>
      </div>
      <Properties />
      <section className="mt-[6px] flex shrink-0 flex-col">
        <DockTitle title="Kommandozeile" />
        <div className="mt-[2px] flex h-[24px] border border-[#9c9a90] bg-white">
          <div className="flex-1 pl-[3px] leading-[11px] text-[#1a1a8c]">
            <p><em>Kommando:</em> gp</p>
            <p><em>Kommando:</em> layeradd</p>
          </div>
          <div className="flex w-[14px] flex-col gap-[2px]">
            <Arrow dir="up" className="h-[10px] w-[14px]" />
            <Arrow dir="down" className="h-[10px] w-[14px]" />
          </div>
        </div>
        <div className="flex h-[22px] items-center bg-white">
          <label htmlFor="kommando">Kommando:</label>
          <input id="kommando" className="h-full min-w-0 flex-1 bg-white pl-1 outline-none" />
          <button type="button" aria-label="Verlauf" className="mr-[1px] flex h-[18px] w-[19px] items-center justify-center rounded-[3px] border-2 border-[#5f7f86] bg-[#ece8d9]">
            <i className="h-[9px] w-3 border border-t-[3px] border-black bg-white" />
          </button>
        </div>
      </section>
    </div>
  );
}

export default function App() {
  return (
    <div className="flex h-screen min-h-[720px] flex-col overflow-hidden bg-black pr-[5px] font-['DejaVu_Sans_Condensed','DejaVu_Sans',sans-serif] text-[10px] leading-[13px] text-[#1c1c1c]">
      <div className="flex min-h-0 flex-1 flex-col bg-[#0a46dc]">
        <TitleBar />
        <div className="mb-1 ml-1 flex min-h-0 flex-1 flex-col bg-[#ece8d9]">
          <nav className="flex h-[17px] shrink-0 items-center gap-[13px] bg-white pl-[5px]">
            {MENU.map((m) => <button key={m} type="button">{m}</button>)}
          </nav>
          <ToolRow items={ROW1} />
          <ToolRow items={ROW2} more />
          <ToolRow items={ROW3} />
          <div className="flex h-[34px] shrink-0 items-center border-t border-[#aaa696] pl-[3px]">
            <div className="h-6 border-l-2 border-dotted border-[#b5b1a1]" />
            <button type="button" aria-label="Auswahl" className="ml-[6px] flex h-[25px] w-[37px] items-center justify-center rounded-[5px] border-2 border-[#979590] bg-[#f4f1e8]">
              <svg viewBox="0 0 12 16" className="h-[13px] w-[10px]" aria-hidden="true"><path d="M2 1V13L5 10L7 15L9 14L7 9H11Z" fill="#fff" stroke="#444" /></svg>
            </button>
            <i className="ml-1 h-[26px] w-px bg-[#c9c5b5]" />
          </div>
          <div className="flex min-h-0 flex-1 border-t border-[#aaa696]">
            <div className="mr-[2px] flex"><ToolColumn items={LEFT} label="Fang" more /></div>
            <Documents />
            <Docks />
            <ToolColumn items={RIGHT} label="Messen" />
          </div>
        </div>
      </div>
    </div>
  );
}
